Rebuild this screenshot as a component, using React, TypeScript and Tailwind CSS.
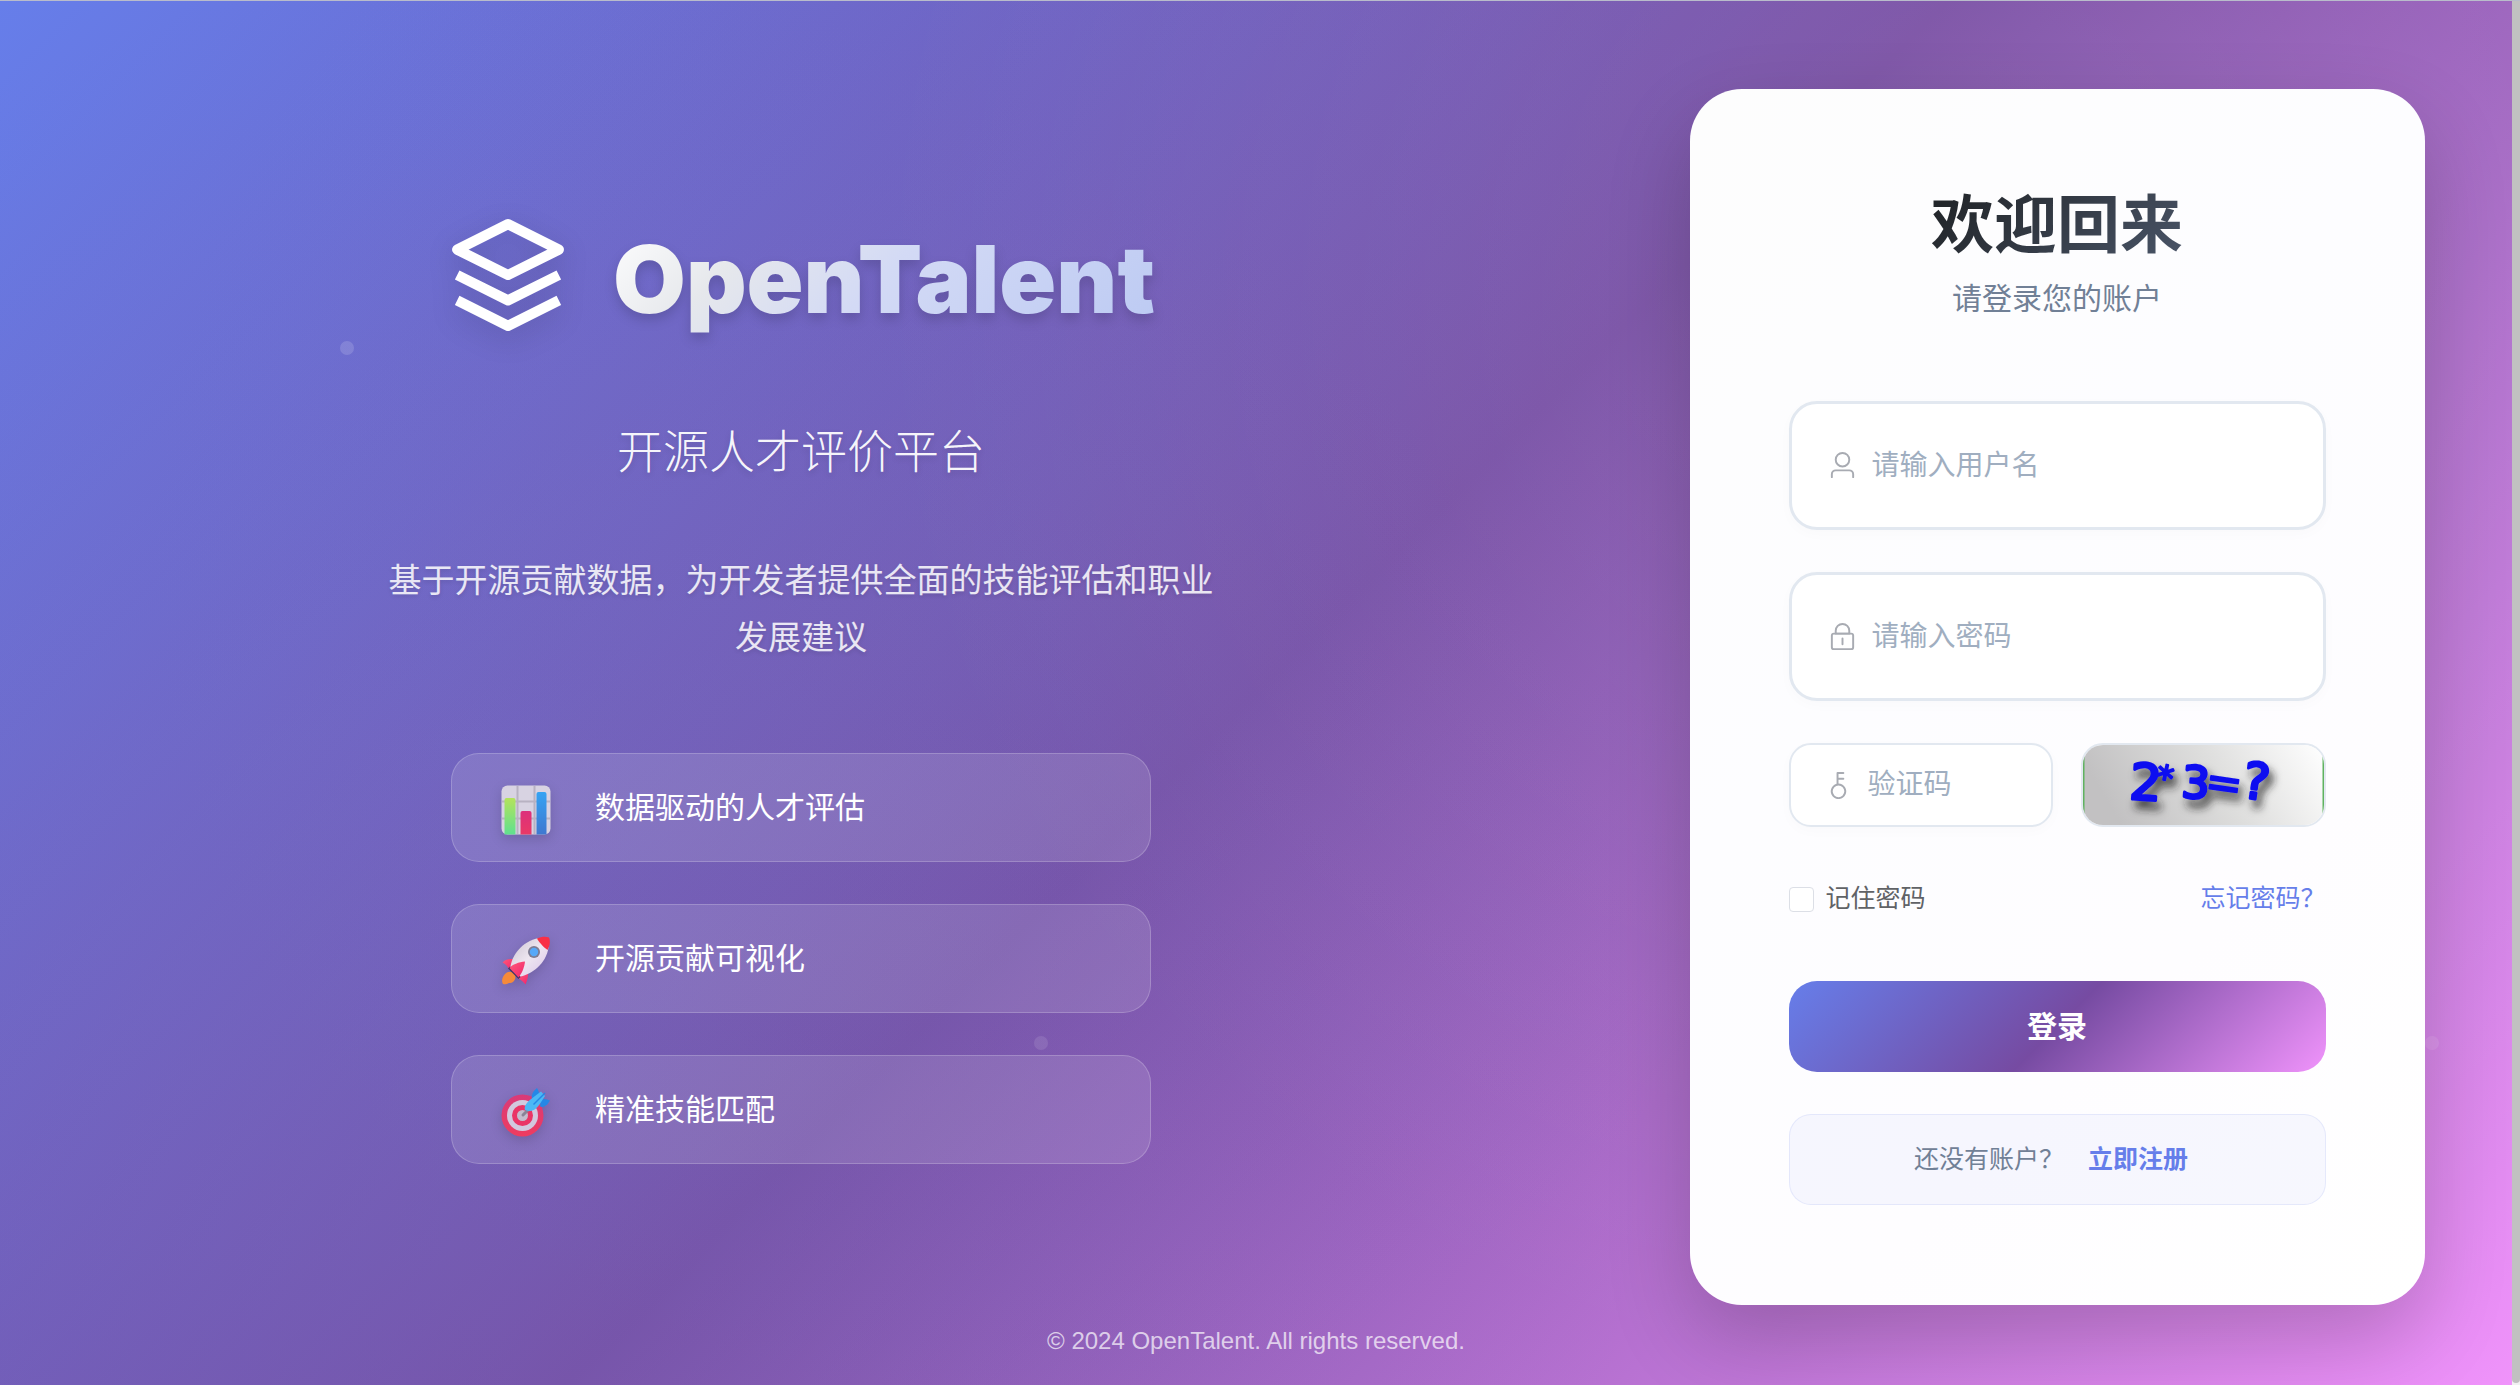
import React from "react";

function LogoIcon() {
  return (
    <svg
      viewBox="0 0 24 24"
      className="size-[122px] shrink-0 drop-shadow-[0_8px_14px_rgba(0,0,0,0.15)]"
      fill="none"
      stroke="white"
      strokeWidth="2"
      strokeLinejoin="round"
      aria-hidden="true"
    >
      <path d="M12 2L2 7l10 5 10-5-10-5z" />
      <path d="M2 12l10 5 10-5" />
      <path d="M2 17l10 5 10-5" />
    </svg>
  );
}

function ChartIcon() {
  return (
    <svg viewBox="0 0 50 50" className="size-full" aria-hidden="true">
      <defs>
        <linearGradient id="chartGreen" x1="0" y1="0" x2="0" y2="1">
          <stop offset="0" stopColor="#b4e35c" />
          <stop offset="1" stopColor="#5fe08f" />
        </linearGradient>
        <linearGradient id="chartPink" x1="0" y1="0" x2="0" y2="1">
          <stop offset="0" stopColor="#dc2f7c" />
          <stop offset="1" stopColor="#e93a66" />
        </linearGradient>
        <linearGradient id="chartBlue" x1="0" y1="0" x2="0" y2="1">
          <stop offset="0" stopColor="#35a3f3" />
          <stop offset="1" stopColor="#3f78d0" />
        </linearGradient>
      </defs>
      <rect x="0.5" y="0.5" width="49" height="49" rx="6" fill="#d8d3e2" />
      <path d="M16.500 1v48M33.500 1v48M1 16.500h48M1 33.500h48" stroke="#b8b2c2" strokeWidth="2" />
      <path d="M3.500 49.500V15a2 2 0 0 1 2-2h7a2 2 0 0 1 2 2v34.500z" fill="url(#chartGreen)" />
      <path d="M19.500 49.500V28a2 2 0 0 1 2-2h7a2 2 0 0 1 2 2v21.500z" fill="url(#chartPink)" />
      <path d="M35.500 49.500V9a2 2 0 0 1 2-2h6a2 2 0 0 1 2 2v40.500z" fill="url(#chartBlue)" />
    </svg>
  );
}

function RocketIcon() {
  return (
    <svg viewBox="0 0 50 50" className="size-full" aria-hidden="true">
      <defs>
        <linearGradient id="rocketBody" x1="0" y1="0" x2="1" y2="1">
          <stop offset="0" stopColor="#c9c1cf" />
          <stop offset="0.5" stopColor="#eee6f0" />
          <stop offset="1" stopColor="#d9c3ea" />
        </linearGradient>
        <linearGradient id="rocketFin" x1="0" y1="0" x2="1" y2="1">
          <stop offset="0" stopColor="#ff5a78" />
          <stop offset="1" stopColor="#f0246e" />
        </linearGradient>
      </defs>
      <path d="M4 38c3-3 7-3 9.500 0 2 3 0.500 6-1.500 8-2 1.500-4 0.500-5 1.500-1.500 1-3 0.800-5 0.500-2-3-0.500-7 2-10z" fill="#f58a3a" />
      <path d="M1.500 26.500C5 23 9 22.500 13 23.500L8 33C6.500 30 4.500 28 1.500 26.500z" fill="url(#rocketFin)" />
      <path d="M17 42l10-6c0.500 4-0.500 8-2.500 12.500C22.500 46 20 44 17 42z" fill="url(#rocketFin)" />
      <path d="M7 32.500L17.500 43l2-2L9 30.500z" fill="#3c3566" />
      <path d="M9.500 30.500C11 20 20 5.500 38 2l9.500 9.500C45 28 31 38 19.500 40.500z" fill="url(#rocketBody)" />
      <path d="M36 2.500C40 0.500 45 0 48 1.500c1.500 3.500 1 8-1.500 12.500C43.500 12 38.500 7 36 2.500z" fill="#f92f45" />
      <path d="M8.500 32C11 28.500 18 26 24 25.500c-0.500 6-3.500 12.500-6.500 16z" fill="url(#rocketFin)" />
      <circle cx="33" cy="16" r="6" fill="#7e7c92" />
      <circle cx="33" cy="16" r="4.200" fill="#57a8f8" />
    </svg>
  );
}

function TargetIcon() {
  return (
    <svg viewBox="0 0 50 50" className="size-full" aria-hidden="true">
      <defs>
        <linearGradient id="targetRed" x1="0" y1="0" x2="0" y2="1">
          <stop offset="0" stopColor="#d93a78" />
          <stop offset="1" stopColor="#ee3c60" />
        </linearGradient>
      </defs>
      <circle cx="21.500" cy="28.500" r="21" fill="url(#targetRed)" />
      <circle cx="21.500" cy="28.500" r="15.500" fill="#d2c9de" />
      <circle cx="21.500" cy="28.500" r="10.500" fill="#ea3566" />
      <circle cx="21.500" cy="28.500" r="5.500" fill="#c4bccd" />
      <path d="M22 28l7-7" stroke="#8a8397" strokeWidth="3" strokeLinecap="round" />
      <path d="M31 13c-1-5 1-9 5-12 2 3 2.500 6 2 9z" fill="#2587e6" />
      <path d="M39 19.500c4 1.500 7.500-1.500 10-6-3-1.500-6-2-9-1z" fill="#2587e6" />
      <path d="M24 23c-1.500-4 3-9 8-12.500L40 4.500l4 4.500-5.500 8.500c-3.500 5-8.500 8.500-14.500 5.500z" fill="#4cb8f5" />
      <path d="M32.500 17.500L44 6" stroke="#2587e6" strokeWidth="1.500" />
    </svg>
  );
}

function UserIcon() {
  return (
    <svg viewBox="0 0 1024 1024" className="size-[31px] shrink-0" fill="currentColor" aria-hidden="true">
      <path d="M512 512a192 192 0 1 0 0-384 192 192 0 0 0 0 384m0 64a256 256 0 1 1 0-512 256 256 0 0 1 0 512m320 320v-96a96 96 0 0 0-96-96H288a96 96 0 0 0-96 96v96a32 32 0 1 1-64 0v-96a160 160 0 0 1 160-160h448a160 160 0 0 1 160 160v96a32 32 0 1 1-64 0" />
    </svg>
  );
}

function LockIcon() {
  return (
    <svg viewBox="0 0 1024 1024" className="size-[31px] shrink-0" fill="currentColor" aria-hidden="true">
      <path d="M224 448a32 32 0 0 0-32 32v384a32 32 0 0 0 32 32h576a32 32 0 0 0 32-32V480a32 32 0 0 0-32-32zm0-64h576a96 96 0 0 1 96 96v384a96 96 0 0 1-96 96H224a96 96 0 0 1-96-96V480a96 96 0 0 1 96-96" />
      <path d="M512 544a32 32 0 0 1 32 32v192a32 32 0 1 1-64 0V576a32 32 0 0 1 32-32m192-160v-64a192 192 0 1 0-384 0v64zM512 64a256 256 0 0 1 256 256v128H256V320A256 256 0 0 1 512 64" />
    </svg>
  );
}

function KeyIcon() {
  return (
    <svg viewBox="0 0 1024 1024" className="size-[31px] shrink-0" fill="currentColor" aria-hidden="true">
      <path d="M448 456.064V96a32 32 0 0 1 32-32.064L672 64a32 32 0 0 1 0 64H512v128h160a32 32 0 0 1 0 64H512v128a256 256 0 1 1-64 8.064M512 896a192 192 0 1 0 0-384 192 192 0 0 0 0 384" />
    </svg>
  );
}

function CaptchaImage() {
  return (
    <svg viewBox="0 0 241 80" className="size-full" role="img" aria-label="2*3=?">
      <defs>
        <linearGradient id="captchaBg" x1="0" y1="0.200" x2="1" y2="0">
          <stop offset="0" stopColor="#c2c1c2" />
          <stop offset="0.500" stopColor="#dededd" />
          <stop offset="1" stopColor="#ffffff" />
        </linearGradient>
        <filter id="captchaShadow" x="-20%" y="-40%" width="140%" height="200%">
          <feDropShadow dx="4" dy="8" stdDeviation="4" floodColor="#222" floodOpacity="0.8" />
        </filter>
      </defs>
      <rect width="241" height="80" fill="url(#captchaBg)" />
      <path d="M0.500 0v80M240.500 0v80" stroke="#5fb25f" strokeWidth="2" />
      <g
        filter="url(#captchaShadow)"
        fill="#0a0af0"
        stroke="#0a0af0"
        strokeWidth="3"
        strokeLinejoin="round"
        fontFamily="'DejaVu Sans', sans-serif"
      >
        <text x="47" y="55" fontSize="50" transform="rotate(4 64 36)">2</text>
        <text x="74" y="45" fontSize="34" strokeWidth="2" transform="rotate(12 83 28)">*</text>
        <text x="99" y="53" fontSize="44" transform="rotate(4 114 36)">3</text>
        <text x="123" y="53" fontSize="44" strokeWidth="2" transform="rotate(8 142 36)">=</text>
        <text x="160" y="54" fontSize="50" transform="rotate(8 174 36)">?</text>
      </g>
    </svg>
  );
}

const features = [
  { icon: <ChartIcon />, text: "数据驱动的人才评估" },
  { icon: <RocketIcon />, text: "开源贡献可视化" },
  { icon: <TargetIcon />, text: "精准技能匹配" },
];

type FieldProps = { id: string; label: string; type: string; icon: React.ReactNode };

function Field({ id, label, type, icon }: FieldProps) {
  return (
    <label
      htmlFor={id}
      className="flex h-[129px] items-center gap-3.5 rounded-[28px] border-3 border-[#e2e8f0] bg-white px-[35px] text-[#a8abb2] shadow-[0_4px_14px_rgba(0,0,0,0.02)]"
    >
      {icon}
      <input
        id={id}
        type={type}
        placeholder={label}
        aria-label={label}
        className="w-full min-w-0 bg-transparent text-[28px] text-[#2d3748] outline-none placeholder:text-[#a0aec0]"
      />
    </label>
  );
}

export default function App() {
  return (
    <div className="flex min-h-screen bg-[#f1f1f1] border-t border-[#b9bccb] font-['Liberation_Sans','Noto_Sans_CJK_SC',sans-serif]">
      <div className="relative flex flex-1 flex-col overflow-hidden bg-[radial-gradient(circle_at_20%_80%,rgba(120,119,198,0.3)_0%,transparent_50%),radial-gradient(circle_at_80%_20%,rgba(255,255,255,0.1)_0%,transparent_50%),radial-gradient(circle_at_40%_40%,rgba(120,119,198,0.2)_0%,transparent_50%),linear-gradient(135deg,#667eea_0%,#764ba2_50%,#f093fb_100%)]">
        <span className="absolute left-[340px] top-[340px] size-3.5 rounded-full bg-white/15" />
        <span className="absolute left-[1034px] top-[1035px] size-3.5 rounded-full bg-white/10" />
        <span className="absolute right-[73px] top-[1035px] size-3.5 rounded-full bg-white/10" />

        <main className="relative flex flex-1 pt-[88px] pb-5">
          <section className="flex flex-1 flex-col items-center justify-center pb-4">
            <div className="flex items-center gap-11">
              <LogoIcon />
              <h1 className="bg-linear-[135deg,#ffffff_0%,#e6e8ec_25%,#d3daf5_50%,#bccaf3_100%] bg-clip-text pt-2 font-['Inter'] text-[94px] leading-[112px] font-black text-transparent drop-shadow-[0_6px_6px_rgba(0,0,0,0.15)]">
                OpenTalent
              </h1>
            </div>
            <p className="mt-20 text-[46px] leading-[72px] font-light text-white/95 text-shadow-[0_3px_6px_rgba(0,0,0,0.12)]">
              开源人才评价平台
            </p>
            <p className="mt-16 max-w-[840px] text-center text-[33px] leading-[57px] text-white/85 text-shadow-[0_2px_4px_rgba(0,0,0,0.12)]">
              基于开源贡献数据，为开发者提供全面的技能评估和职业发展建议
            </p>
            <ul className="mt-[87px] flex w-[700px] flex-col gap-[42px]">
              {features.map((f) => (
                <li
                  key={f.text}
                  className="flex h-[109px] items-center gap-11 rounded-[28px] border border-white/20 bg-white/12 px-[49px]"
                >
                  <span className="mt-1 size-[50px] shrink-0 drop-shadow-[0_4px_6px_rgba(0,0,0,0.15)]">{f.icon}</span>
                  <span className="text-[30px] text-white">{f.text}</span>
                </li>
              ))}
            </ul>
          </section>

          <section className="flex w-[910px] items-start justify-center">
            <div className="w-[735px] rounded-[52px] bg-[linear-gradient(135deg,#fdfdfd_0%,#fdfdff_40%,#fefdff_70%,#ffffff_100%)] px-[99px] py-[100px] shadow-[0_35px_84px_rgba(0,0,0,0.2)]">
              <div className="flex flex-col items-center">
                <h2 className="bg-linear-[135deg,#1f2225_0%,#4a5568_100%] bg-clip-text text-[63px] leading-[72px] font-bold text-transparent">
                  欢迎回来
                </h2>
                <p className="mt-4 text-[30px] leading-[44px] text-[#718096]">请登录您的账户</p>
              </div>

              <form className="mt-20 flex flex-col gap-[42px]" onSubmit={(e) => e.preventDefault()}>
                <Field id="username" label="请输入用户名" type="text" icon={<UserIcon />} />
                <Field id="password" label="请输入密码" type="password" icon={<LockIcon />} />

                <div className="flex gap-7">
                  <label
                    htmlFor="captcha"
                    className="flex h-[84px] flex-1 items-center gap-3.5 rounded-[22px] border-2 border-[#e2e8f0] bg-white px-8 text-[#a8abb2] shadow-[0_4px_14px_rgba(0,0,0,0.02)]"
                  >
                    <KeyIcon />
                    <input
                      id="captcha"
                      type="text"
                      placeholder="验证码"
                      aria-label="验证码"
                      className="w-full min-w-0 bg-transparent text-[28px] text-[#2d3748] outline-none placeholder:text-[#a0aec0]"
                    />
                  </label>
                  <button
                    type="button"
                    aria-label="刷新验证码"
                    className="h-[84px] w-[245px] overflow-hidden rounded-[22px] border-2 border-[#e2e8f0]"
                  >
                    <CaptchaImage />
                  </button>
                </div>

                <div className="mt-2.5 flex h-10 items-center justify-between">
                  <label htmlFor="remember" className="flex items-center gap-3 text-[25px] text-[#606266]">
                    <input
                      id="remember"
                      type="checkbox"
                      className="size-[25px] appearance-none rounded-[4px] border border-[#dcdfe6] bg-white"
                    />
                    记住密码
                  </label>
                  <a href="#forgot" className="text-[25px] text-[#667eea]">
                    忘记密码？
                  </a>
                </div>

                <button
                  type="submit"
                  className="mt-5 h-[91px] rounded-[28px] bg-[linear-gradient(135deg,#667eea_0%,#764ba2_50%,#f093fb_100%)] text-[30px] font-bold text-white"
                >
                  登录
                </button>

                <div className="flex h-[91px] items-center justify-center gap-3 rounded-[22px] border border-[#667eea]/12 bg-[#667eea]/5 text-[25px]">
                  <span className="text-[#718096]">还没有账户？</span>
                  <a href="#register" className="px-3 font-bold text-[#667eea]">
                    立即注册
                  </a>
                </div>
              </form>
            </div>
          </section>
        </main>

        <footer className="relative pb-7 text-center text-[24px] leading-8 text-white/70">
          © 2024 OpenTalent. All rights reserved.
        </footer>
      </div>
      <div className="w-2 shrink-0 pb-0.5" aria-hidden="true">
        <div className="h-full rounded-b-[4px] bg-[#c1c1c1]" />
      </div>
    </div>
  );
}
